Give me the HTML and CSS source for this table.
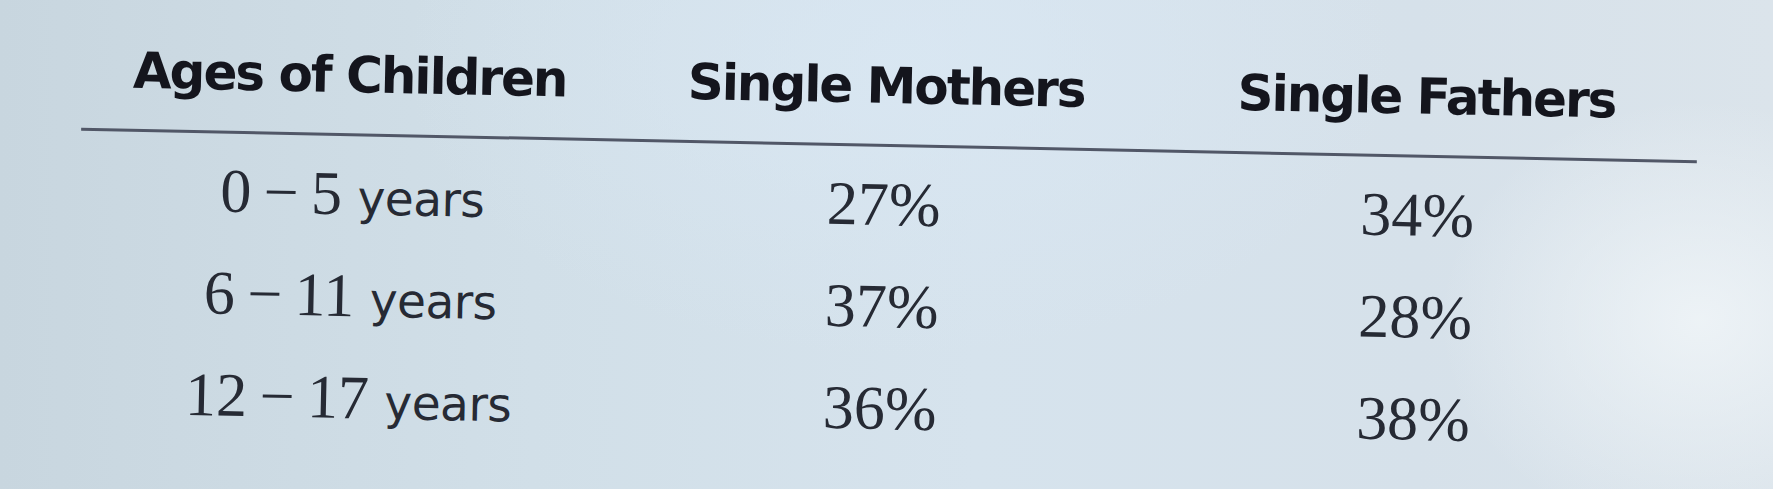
FILE: index.html
```html
<!DOCTYPE html>
<html lang="en">
<head>
<meta charset="utf-8">
<title>Ages of Children</title>
<link rel="stylesheet" href="styles.css">
</head>
<body>
<div class="screen">
  <div class="table">
    <div class="row head">
      <div class="cell">Ages of Children</div>
      <div class="cell">Single Mothers</div>
      <div class="cell">Single Fathers</div>
    </div>
    <div class="body">
      <div class="row">
        <div class="cell"><span class="num">0&thinsp;&minus;&thinsp;5</span> <span class="unit">years</span></div>
        <div class="cell"><span class="num">27%</span></div>
        <div class="cell"><span class="num">34%</span></div>
      </div>
      <div class="row">
        <div class="cell"><span class="num">6&thinsp;&minus;&thinsp;11</span> <span class="unit">years</span></div>
        <div class="cell"><span class="num">37%</span></div>
        <div class="cell"><span class="num">28%</span></div>
      </div>
      <div class="row">
        <div class="cell"><span class="num">12&thinsp;&minus;&thinsp;17</span> <span class="unit">years</span></div>
        <div class="cell"><span class="num">36%</span></div>
        <div class="cell"><span class="num">38%</span></div>
      </div>
    </div>
  </div>
</div>
</body>
</html>
```

FILE: styles.css
```css
html, body {
  margin: 0;
  padding: 0;
}

body {
  width: 1773px;
  height: 489px;
  overflow: hidden;
}

.screen {
  width: 1773px;
  height: 489px;
  overflow: hidden;
  background:
    radial-gradient(ellipse 260px 220px at 1700px 320px, rgba(240, 245, 248, 0.85), rgba(240, 245, 248, 0) 100%),
    radial-gradient(ellipse 500px 300px at 900px 60px, rgba(218, 232, 244, 0.7), rgba(218, 232, 244, 0) 100%),
    linear-gradient(90deg, #c8d6df 0%, #d1dfe8 30%, #d6e3ed 55%, #d6e1ea 80%, #dbe4eb 100%);
}

.table {
  margin-left: 81px;
  width: 1616px;
  transform: rotate(1.15deg);
  transform-origin: 808px 145px;
  color: #22252f;
}

.row {
  display: grid;
  grid-template-columns: 535px 538px 543px;
}

.cell {
  text-align: center;
  white-space: nowrap;
}

.head {
  padding-top: 56px;
  padding-bottom: 28px;
  border-bottom: 3px solid #515767;
  font-family: "DejaVu Sans", Verdana, sans-serif;
  font-weight: bold;
  font-size: 50px;
  line-height: 60px;
  letter-spacing: -2px;
  color: #14151d;
}

.body {
  padding-top: 6px;
}

.body .row {
  height: 102px;
  font-family: "Liberation Serif", "Times New Roman", serif;
  font-size: 62px;
  line-height: 102px;
}

.body .cell:first-child {
  padding-left: 10px;
}

.body .cell:last-child {
  padding-right: 14px;
}

.num {
  color: #262a34;
}

.unit {
  font-family: "DejaVu Sans", Verdana, sans-serif;
  font-size: 47px;
  line-height: 1;
  letter-spacing: -0.5px;
  color: #262a34;
}
```
